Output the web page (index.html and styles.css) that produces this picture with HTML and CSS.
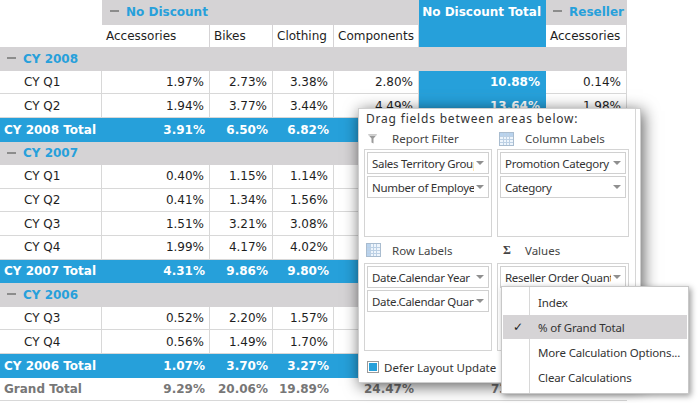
FILE: index.html
```html
<!DOCTYPE html>
<html>
<head>
<meta charset="utf-8">
<link rel="stylesheet" href="styles.css">
</head>
<body>
<table class="grid">
  <colgroup>
    <col class="w0"><col class="w1"><col class="w2"><col class="w3"><col class="w4"><col class="w5"><col class="w6">
  </colgroup>
  <tr class="h1">
    <td class="corner" rowspan="2"></td>
    <td class="hgroup" colspan="4"><span class="minus"></span>No Discount</td>
    <td class="htotal" rowspan="2">No Discount Total</td>
    <td class="hgroup hres"><span class="minus"></span>Reseller</td>
  </tr>
  <tr class="h2">
    <td class="hcol">Accessories</td><td class="hcol">Bikes</td><td class="hcol">Clothing</td><td class="hcol">Components</td><td class="hcol">Accessories</td>
  </tr>
  <tr class="grp"><td colspan="7"><span class="minus"></span>CY 2008</td></tr>
  <tr class="data"><td class="rh">CY Q1</td><td>1.97%</td><td>2.73%</td><td>3.38%</td><td>2.80%</td><td class="tot">10.88%</td><td>0.14%</td></tr>
  <tr class="data"><td class="rh">CY Q2</td><td>1.94%</td><td>3.77%</td><td>3.44%</td><td>4.49%</td><td class="tot">13.64%</td><td>1.98%</td></tr>
  <tr class="total"><td class="rh">CY 2008 Total</td><td>3.91%</td><td>6.50%</td><td>6.82%</td><td>7.29%</td><td>24.52%</td><td>2.12%</td></tr>
  <tr class="grp"><td colspan="7"><span class="minus"></span>CY 2007</td></tr>
  <tr class="data"><td class="rh">CY Q1</td><td>0.40%</td><td>1.15%</td><td>1.14%</td><td>1.37%</td><td class="tot">4.06%</td><td>0.10%</td></tr>
  <tr class="data"><td class="rh">CY Q2</td><td>0.41%</td><td>1.34%</td><td>1.56%</td><td>1.82%</td><td class="tot">5.13%</td><td>0.12%</td></tr>
  <tr class="data"><td class="rh">CY Q3</td><td>1.51%</td><td>3.21%</td><td>3.08%</td><td>3.95%</td><td class="tot">11.75%</td><td>0.41%</td></tr>
  <tr class="data"><td class="rh">CY Q4</td><td>1.99%</td><td>4.17%</td><td>4.02%</td><td>4.73%</td><td class="tot">14.91%</td><td>0.52%</td></tr>
  <tr class="total"><td class="rh">CY 2007 Total</td><td>4.31%</td><td>9.86%</td><td>9.80%</td><td>11.87%</td><td>35.84%</td><td>1.15%</td></tr>
  <tr class="grp"><td colspan="7"><span class="minus"></span>CY 2006</td></tr>
  <tr class="data"><td class="rh">CY Q3</td><td>0.52%</td><td>2.20%</td><td>1.57%</td><td>2.41%</td><td class="tot">6.70%</td><td>0.21%</td></tr>
  <tr class="data"><td class="rh">CY Q4</td><td>0.56%</td><td>1.49%</td><td>1.70%</td><td>2.90%</td><td class="tot">6.65%</td><td>0.27%</td></tr>
  <tr class="total"><td class="rh">CY 2006 Total</td><td>1.07%</td><td>3.70%</td><td>3.27%</td><td>5.31%</td><td>13.35%</td><td>0.48%</td></tr>
  <tr class="grand"><td class="rh">Grand Total</td><td>9.29%</td><td>20.06%</td><td>19.89%</td><td>24.47%</td><td>73.71%</td><td>3.75%</td></tr>
</table>

<div class="fieldlist">
  <div class="fl-inner">
    <div class="hint">Drag fields between areas below:</div>
    <div class="areas">
      <div class="area-head">
        <span class="ico ico-filter"><svg width="9" height="10" viewBox="0 0 9 10"><path d="M0 0.5H9L5.5 4.5V9.5L3.5 8.5V4.5Z" fill="#9a9a9a"/><path d="M1 1.5H8" stroke="#d0d0d0" stroke-width="1"/></svg></span>Report Filter
      </div>
      <div class="area-head">
        <span class="ico ico-grid"><svg width="15" height="14" viewBox="0 0 15 14"><rect x="0.5" y="0.5" width="14" height="13" fill="#eef5fc" stroke="#a9bccf"/><rect x="1" y="1" width="13" height="3" fill="#b9d3ee"/><path d="M1 4.5H14M1 7.5H14M1 10.5H14M4.5 1V13M7.5 1V13M10.5 1V13" stroke="#bcd0e4" stroke-width="1"/></svg></span>Column Labels
      </div>
      <div class="area-box">
        <div class="field"><span class="fname">Sales Territory Group</span><span class="arrow"></span></div>
        <div class="field"><span class="fname">Number of Employees</span><span class="arrow"></span></div>
      </div>
      <div class="area-box">
        <div class="field"><span class="fname">Promotion Category</span><span class="arrow"></span></div>
        <div class="field"><span class="fname">Category</span><span class="arrow"></span></div>
      </div>
      <div class="area-head">
        <span class="ico ico-grid2"><svg width="15" height="14" viewBox="0 0 15 14"><rect x="0.5" y="0.5" width="14" height="13" fill="#eef5fc" stroke="#a9bccf"/><rect x="1" y="1" width="3.5" height="12" fill="#b9d3ee"/><path d="M1 4.5H14M1 7.5H14M1 10.5H14M4.5 1V13M7.5 1V13M10.5 1V13" stroke="#bcd0e4" stroke-width="1"/></svg></span>Row Labels
      </div>
      <div class="area-head">
        <span class="ico ico-sigma">Σ</span>Values
      </div>
      <div class="area-box">
        <div class="field"><span class="fname">Date.Calendar Year</span><span class="arrow"></span></div>
        <div class="field"><span class="fname">Date.Calendar Quarter</span><span class="arrow"></span></div>
      </div>
      <div class="area-box">
        <div class="field"><span class="fname">Reseller Order Quantity</span><span class="arrow"></span></div>
      </div>
    </div>
    <div class="footer">
      <span class="checkbox"><span class="checkmark"></span></span>Defer Layout Update
    </div>
  </div>
</div>

<div class="menu">
  <div class="mi"><span class="chk"></span>Index</div>
  <div class="mi sel"><span class="chk">✓</span>% of Grand Total</div>
  <div class="mi"><span class="chk"></span>More Calculation Options...</div>
  <div class="mi"><span class="chk"></span>Clear Calculations</div>
</div>
</body>
</html>
```

FILE: styles.css
```css
html, body {
  margin: 0;
  padding: 0;
}
body {
  width: 700px;
  height: 403px;
  overflow: hidden;
  background: #ffffff;
  position: relative;
  font-family: "DejaVu Sans", Verdana, sans-serif;
  font-size: 12px;
}

.grid {
  border-collapse: separate;
  border-spacing: 0;
  table-layout: fixed;
  width: 627px;
}
.w0 { width: 102px; }
.w1 { width: 108px; }
.w2 { width: 63px; }
.w3 { width: 61px; }
.w4 { width: 85px; }
.w5 { width: 127px; }
.w6 { width: 81px; }

.grid tr { height: 23.6px; }
.grid td {
  padding: 0 5px 0 0;
  white-space: nowrap;
  overflow: hidden;
  text-align: right;
  color: #1e1e1e;
  vertical-align: middle;
}

.minus {
  display: inline-block;
  width: 9px;
  height: 2px;
  background: #8c8c8c;
  vertical-align: middle;
  margin-right: 7px;
  position: relative;
  top: -1px;
}

.corner { background: #ffffff; }
.hgroup {
  background: #d5d3d5;
  text-align: left !important;
  padding-left: 8px !important;
  color: #27a0db !important;
  font-weight: bold;
}
.hres { padding-left: 7px !important; }
.htotal {
  background: #26a0da;
  color: #ffffff !important;
  font-weight: bold;
  vertical-align: top !important;
  padding-top: 5px !important;
  padding-right: 5px !important;
}
.hcol {
  background: #ffffff;
  text-align: left !important;
  padding-left: 4px !important;
  border-right: 1px solid #d5d3d5;
  border-top: 1px solid #d5d3d5;
}

.grp td {
  background: #d5d3d5;
  text-align: left;
  padding-left: 7px;
  color: #27a0db;
  font-weight: bold;
}

.data td {
  border-right: 1px solid #d8d8d8;
  border-bottom: 1px solid #d8d8d8;
  background: #ffffff;
}
.data td.rh {
  text-align: left;
  padding-left: 24px;
}
.data td.tot {
  background: #26a0da;
  color: #ffffff;
  font-weight: bold;
  border-right-color: #26a0da;
  border-bottom-color: #2a9fd6;
}

.total td {
  background: #26a0da;
  color: #ffffff;
  font-weight: bold;
}
.total td.rh { text-align: left; padding-left: 4px; }

.grand td {
  color: #777777;
  font-weight: bold;
  border-bottom: 1px solid #d8d8d8;
}
.grand td.rh { text-align: left; padding-left: 4px; }

/* Field list popup */
.fieldlist {
  position: absolute;
  left: 358px;
  top: 108px;
  width: 283px;
  height: 275px;
  box-sizing: border-box;
  border: 1px solid #cfcfcf;
  background: #ffffff;
  box-shadow: 2px 3px 15px rgba(0, 0, 0, 0.65);
  font-family: "Noto Sans", "Open Sans", sans-serif;
  font-size: 11.5px;
  color: #333333;
}
.fl-inner {
  width: 277px;
  height: 100%;
  box-sizing: border-box;
  border-right: 1px solid #d6d6d6;
}
.hint {
  height: 19px;
  line-height: 19px;
  padding-left: 7px;
  font-size: 12px;
  letter-spacing: 0.8px;
}
.areas {
  display: grid;
  grid-template-columns: 128px 132px;
  grid-template-rows: 21px 88px 26px 88px;
  column-gap: 5px;
  padding-left: 5px;
}
.area-head {
  display: flex;
  align-items: center;
  color: #444444;
}
.ico {
  display: inline-flex;
  align-items: center;
  width: 28px;
  flex: none;
}
.ico-filter svg { margin-left: 4px; }
.ico-grid svg { margin-left: 2px; }
.ico-grid2 svg { margin-left: 2px; }
.ico-sigma {
  font-family: "Liberation Serif", "DejaVu Serif", serif;
  font-weight: bold;
  font-size: 12px;
  color: #444444;
  padding-left: 6px;
  width: 22px;
}
.area-box {
  box-sizing: border-box;
  border: 1px solid #d4d4d4;
  padding: 2px;
  display: flex;
  flex-direction: column;
  gap: 2px;
}
.field {
  height: 22px;
  box-sizing: border-box;
  border: 1px solid #d0d0d0;
  display: flex;
  align-items: center;
  padding-left: 4px;
  color: #333333;
  letter-spacing: -0.3px;
}
.fname {
  flex: 1;
  overflow: hidden;
  white-space: nowrap;
}
.arrow {
  flex: none;
  width: 0;
  height: 0;
  border-left: 4px solid transparent;
  border-right: 4px solid transparent;
  border-top: 4px solid #8f8f8f;
  margin: 0 4px 0 2px;
}
.footer {
  display: flex;
  align-items: center;
  height: 32px;
  padding-left: 8px;
  color: #333333;
}
.checkbox {
  width: 12px;
  height: 12px;
  box-sizing: border-box;
  border: 1px solid #9a9a9a;
  padding: 1px;
  margin-right: 5px;
  background: #ffffff;
}
.checkmark {
  display: block;
  width: 8px;
  height: 8px;
  background: #26a0da;
}

/* Context menu */
.menu {
  position: absolute;
  left: 501px;
  top: 286px;
  width: 188px;
  height: 108px;
  box-sizing: border-box;
  border: 1px solid #c8c8c8;
  padding: 2px 1px 0 1px;
  background: linear-gradient(to right, transparent 27px, #d8d8d8 27px, #d8d8d8 28px, transparent 28px), #ffffff;
  box-shadow: 2px 2px 6px rgba(0, 0, 0, 0.4);
  font-family: "Noto Sans", "Open Sans", sans-serif;
  font-size: 11.5px;
  color: #333333;
  letter-spacing: -0.15px;
}
.mi {
  height: 24px;
  margin: 1px 0;
  display: flex;
  align-items: center;
}
.mi.sel { background: #d6d4d6; }
.chk {
  width: 35px;
  flex: none;
  padding-left: 10px;
  box-sizing: border-box;
  font-family: "DejaVu Sans", sans-serif;
  font-size: 12px;
  color: #222222;
}
```
